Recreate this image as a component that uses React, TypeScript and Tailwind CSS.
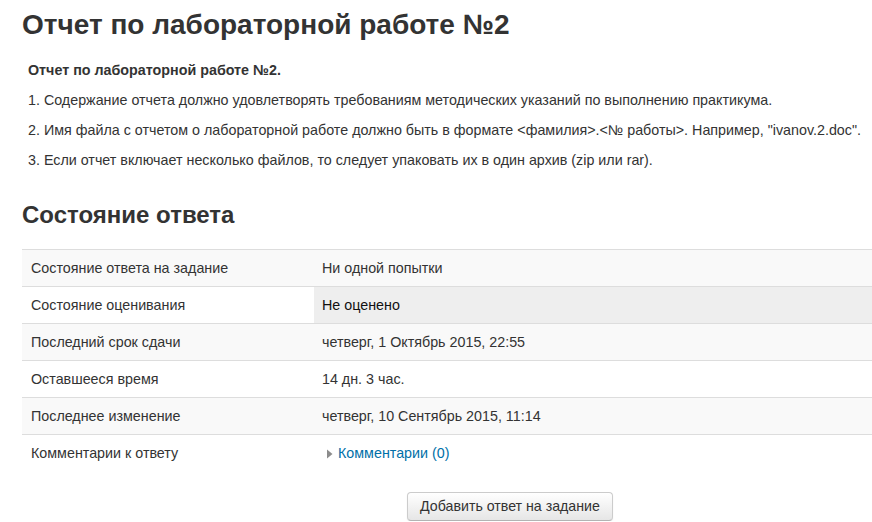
const rows: { label: string; value: React.ReactNode; striped: boolean; highlight?: boolean }[] = [
  { label: 'Состояние ответа на задание', value: 'Ни одной попытки', striped: true },
  { label: 'Состояние оценивания', value: 'Не оценено', striped: false, highlight: true },
  { label: 'Последний срок сдачи', value: 'четверг, 1 Октябрь 2015, 22:55', striped: true },
  { label: 'Оставшееся время', value: '14 дн. 3 час.', striped: false },
  { label: 'Последнее изменение', value: 'четверг, 10 Сентябрь 2015, 11:14', striped: true },
];

function CommentsToggle() {
  return (
    <span className="inline-flex items-center gap-[4px]">
      <svg width="8" height="10" viewBox="0 0 8 10" className="mt-[1px]">
        <path d="M1 0.5 L6.5 5 L1 9.5 Z" fill="#8c8c8c" />
      </svg>
      <a href="#" className="text-[#0070a8] hover:underline">
        Комментарии (0)
      </a>
    </span>
  );
}

export default function App() {
  return (
    <div className="w-full overflow-hidden bg-white text-[#333] font-['Liberation_Sans',Arial,sans-serif]">
      <div className="w-[998px] pl-[22px]">
        <h2 className="pt-[5px] text-[28px] leading-[40px] font-bold">Отчет по лабораторной работе №2</h2>

        <div className="mt-[15px] pl-[6px] text-[14.3px] leading-[20px]">
          <p className="mb-[10px] font-bold">Отчет по лабораторной работе №2.</p>
          <p className="mb-[10px]">
            1. Содержание отчета должно удовлетворять требованиям методических указаний по выполнению практикума.
          </p>
          <p className="mb-[10px]">
            2. Имя файла с отчетом о лабораторной работе должно быть в формате &lt;фамилия&gt;.&lt;№ работы&gt;. Например,
            "ivanov.2.doc".
          </p>
          <p className="mb-[10px]">
            3. Если отчет включает несколько файлов, то следует упаковать их в один архив (zip или rar).
          </p>
        </div>

        <h3 className="mt-[25px] text-[24px] leading-[40px] font-bold">Состояние ответа</h3>

        <table className="mt-[14px] w-full border-collapse text-[14.3px] leading-[20px]">
          <tbody>
            {rows.map((row) => (
              <tr key={row.label} className={`border-t border-[#ddd] ${row.striped ? 'bg-[#f9f9f9]' : 'bg-white'}`}>
                <td className="w-[292px] py-[8px] pl-[9px] pr-[8px]">{row.label}</td>
                <td className={`py-[8px] pl-[8px] ${row.highlight ? 'bg-[#eee] text-[#111]' : ''}`}>{row.value}</td>
              </tr>
            ))}
            <tr className="border-t border-[#ddd] bg-white">
              <td className="w-[292px] py-[8px] pl-[9px] pr-[8px]">Комментарии к ответу</td>
              <td className="py-[8px] pl-[12px]">
                <CommentsToggle />
              </td>
            </tr>
          </tbody>
        </table>

        <div className="mt-[20px] flex justify-center">
          <button
            type="button"
            className="h-[29px] rounded-[4px] border border-[#ccc] border-b-[#b3b3b3] bg-gradient-to-b from-white to-[#e6e6e6] px-[12px] text-[14.2px] leading-[20px] text-[#333] shadow-[inset_0_1px_0_rgba(255,255,255,0.2),0_1px_2px_rgba(0,0,0,0.05)]"
          >
            Добавить ответ на задание
          </button>
        </div>
      </div>
    </div>
  );
}
